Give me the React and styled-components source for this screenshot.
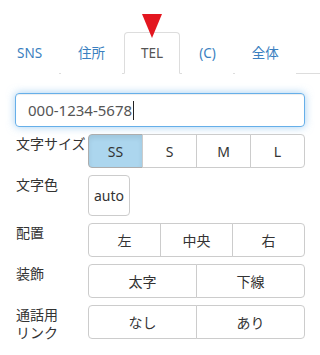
import React, {useState} from 'react';
import styled, {createGlobalStyle} from 'styled-components';

const GlobalStyle = createGlobalStyle`
body {
  margin: 0;
  background: #fff;
  font-family: "Noto Sans", "Noto Sans CJK JP", sans-serif;
  color: #333;
}
`;

const Page = styled.div`
width: 320px;
height: 355px;
padding-top: 32px;
box-sizing: border-box;
overflow: hidden;
`;

const TabBar = styled.ul`
display: flex;
margin: 0;
padding: 0;
list-style: none;
border-bottom: 1px solid #ddd;
`;

const Tab = styled.li`
position: relative;
margin: 0 2px -1px 0;
padding: 10px 16px;
line-height: 20px;
font-size: 13.5px;
border: 1px solid ${p => (p.$active ? '#ddd' : 'transparent')};
border-bottom-color: ${p => (p.$active ? '#fff' : 'transparent')};
border-radius: 4px 4px 0 0;
background: #fff;
color: ${p => (p.$active ? '#555' : '#3a7fc0')};
cursor: pointer;
`;

const Pointer = styled.span`
position: absolute;
left: 50%;
top: -19px;
width: 0;
height: 0;
margin-left: -10px;
border-left: 10px solid transparent;
border-right: 10px solid transparent;
border-top: 24px solid #e3161f;
`;

const Form = styled.div`
padding: 19px 15px 0;
display: flex;
flex-direction: column;
gap: 7px;
`;

const Field = styled.div`
height: 34px;
box-sizing: border-box;
padding: 6px 12px;
border: 1px solid #66afe9;
border-radius: 4px;
box-shadow: inset 0 1px 1px rgba(0,0,0,.075), 0 0 8px rgba(102,175,233,.6);
font-size: 15px;
line-height: 20px;
color: #555;
display: flex;
align-items: center;
`;

const Caret = styled.span`
display: inline-block;
width: 1px;
height: 19px;
background: #222;
margin-left: 1px;
`;

const Row = styled.div`
display: grid;
grid-template-columns: 73px 1fr;
align-items: start;
`;

const Label = styled.div`
font-size: 14px;
line-height: 18px;
padding-top: 1px;
padding-left: 1px;
color: #333;
`;

const Group = styled.div`
display: flex;
`;

const Btn = styled.button`
flex: ${p => (p.$single ? '0 0 42px' : '1 1 0')};
height: ${p => (p.$single ? '41px' : '34px')};
margin-left: -1px;
padding: 0;
border: 1px solid ${p => (p.$active ? '#adadad' : '#ccc')};
background: ${p => (p.$active ? '#acd6ee' : '#fff')};
box-shadow: ${p => (p.$active ? 'inset 0 3px 5px rgba(0,0,0,.08)' : 'none')};
color: #333;
font-family: "Noto Sans", "Noto Sans CJK JP", sans-serif;
font-size: 14px;
border-radius: 0;
cursor: pointer;
&:first-child {
  margin-left: 0;
  border-top-left-radius: 4px;
  border-bottom-left-radius: 4px;
}
&:last-child {
  border-top-right-radius: 4px;
  border-bottom-right-radius: 4px;
}
`;

const tabs = ['SNS', '住所', 'TEL', '(C)', '全体'];

const ButtonRow = ({label, options, value, onPick, single}) => (
  <Row>
    <Label>{label}</Label>
    <Group>
      {options.map(o => (
        <Btn key={o} $single={single} $active={o === value} onClick={() => onPick && onPick(o)}>{o}</Btn>
      ))}
    </Group>
  </Row>
);

const App = () => {
  const [tab, setTab] = useState('TEL');
  const [size, setSize] = useState('SS');
  const [align, setAlign] = useState(null);
  const [deco, setDeco] = useState(null);
  const [link, setLink] = useState(null);

  return (
    <Page>
      <GlobalStyle />
      <TabBar>
        {tabs.map(t => (
          <Tab key={t} $active={t === tab} onClick={() => setTab(t)}>
            {t === tab && <Pointer />}
            {t}
          </Tab>
        ))}
      </TabBar>
      <Form>
        <Field>000-1234-5678<Caret /></Field>
        <ButtonRow label="文字サイズ" options={['SS', 'S', 'M', 'L']} value={size} onPick={setSize} />
        <ButtonRow label="文字色" options={['auto']} single />
        <ButtonRow label="配置" options={['左', '中央', '右']} value={align} onPick={setAlign} />
        <ButtonRow label="装飾" options={['太字', '下線']} value={deco} onPick={setDeco} />
        <ButtonRow label={<>通話用<br />リンク</>} options={['なし', 'あり']} value={link} onPick={setLink} />
      </Form>
    </Page>
  );
};

export default App;
